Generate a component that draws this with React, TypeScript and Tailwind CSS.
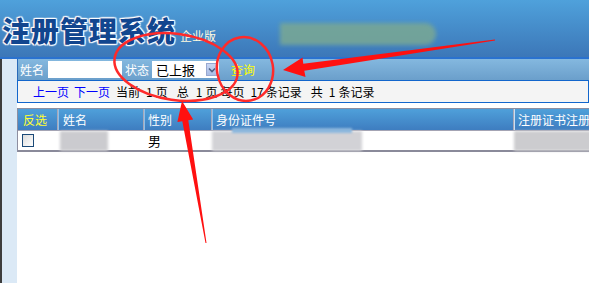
import React from 'react';

const cjk = '"Noto Sans CJK SC", "Liberation Sans", sans-serif';

export default function App() {
  const pager = [
    { t: '上一页', blue: true, ml: 0 },
    { t: '下一页', blue: true, ml: 5 },
    { t: '当前', ml: 6 },
    { t: '1', ml: 6 },
    { t: '页', ml: 3 },
    { t: '总', ml: 9 },
    { t: '1', ml: 7 },
    { t: '页', ml: 3 },
    { t: '每页', ml: 3 },
    { t: '17', ml: 6 },
    { t: '条记录', ml: 2 },
    { t: '共', ml: 9 },
    { t: '1', ml: 6 },
    { t: '条记录', ml: 3 },
  ];

  return (
    <div className="relative w-[589px] h-[283px] overflow-hidden bg-white" style={{ fontFamily: cjk }}>
      {/* 顶部标题栏 */}
      <div className="relative h-[57px] bg-gradient-to-b from-[#4fa1db] to-[#3c77b8] flex items-start pt-[13px] pl-[2px]">
        <span className="text-[28px] leading-[34px] font-black text-[#12468f] tracking-[1px] [text-shadow:0_0_2px_#fff,0_0_2px_#fff,1px_1px_1px_#fff,-1px_-1px_1px_#fff,1px_-1px_1px_#fff,-1px_1px_1px_#fff]">
          注册管理系统
        </span>
        <span className="ml-[4px] mt-[16px] text-[12px] leading-[14px] text-[#fffbe0]">企业版</span>
        {/* 打码区域 */}
        <div className="absolute left-[280px] top-[23px] w-[156px] h-[22px] rounded-r-full bg-[#7aa893] blur-[2px] opacity-85"></div>
      </div>
      <div className="h-[2px] bg-[#2a72cf]"></div>

      <div className="flex">
        {/* 左侧边栏 */}
        <div className="w-[17px] h-[224px] bg-[#dbe9f6] border-l-2 border-[#3d3d3d]"></div>

        {/* 主体 */}
        <div className="flex-1 min-w-0">
          {/* 查询栏 */}
          <div className="h-[21px] flex items-center bg-gradient-to-b from-[#84b8df] to-[#6b9fcb] border-l border-[#2a6ab8] text-[12px] text-white">
            <span className="ml-[2px]">姓名</span>
            <div className="ml-[4px] w-[74px] h-[17px] bg-white"></div>
            <span className="ml-[3px]">状态</span>
            <div className="ml-[3px] w-[67px] h-[17px] bg-white flex items-center justify-between pl-[4px] pr-[1px]">
              <span className="text-[13px] leading-[17px] text-black">已上报</span>
              <div className="w-[12px] h-[13px] bg-gradient-to-b from-[#c9d6f2] to-[#a9bde6] border border-[#98a8d0] flex items-center justify-center">
                <svg width="8" height="6" viewBox="0 0 8 6">
                  <path d="M1 1.5 L4 4.5 L7 1.5" fill="none" stroke="#4d6185" strokeWidth="1.6" />
                </svg>
              </div>
            </div>
            <span className="ml-[12px] text-[#ffff00]">查询</span>
          </div>

          {/* 分页栏 */}
          <div className="h-[23px] bg-[#f4f4f4] border border-[#1266cc] flex items-center pl-[15px] text-[12px] text-black whitespace-nowrap">
            {pager.map((p, i) => (
              <span key={i} className={p.blue ? 'text-[#0000ff]' : ''} style={{ marginLeft: p.ml }}>
                {p.t}
              </span>
            ))}
          </div>

          {/* 表格 */}
          <div className="mt-[5px] w-[620px] border-t border-l border-[#8e8ea0] text-[12px]">
            <div className="flex h-[22px] bg-gradient-to-b from-[#4fa0da] to-[#3e7dc0] text-white border-b border-[#a4a4b4]">
              <div className="w-[40px] border-r border-[#a8a8b8] flex items-center pl-[5px] text-[#ffff33]">反选</div>
              <div className="w-[86px] border-r border-[#a8a8b8] border-l border-l-[#8ec0ea] flex items-center pl-[4px]">姓名</div>
              <div className="w-[68px] border-r border-[#a8a8b8] border-l border-l-[#8ec0ea] flex items-center pl-[3px]">性别</div>
              <div className="w-[302px] border-r border-[#a8a8b8] border-l border-l-[#8ec0ea] flex items-center pl-[3px]">身份证件号</div>
              <div className="flex-1 border-l border-l-[#c8e0f6] flex items-center pl-[3px] whitespace-nowrap">注册证书注册号</div>
            </div>
            <div className="flex h-[21px] bg-white border-b-2 border-[#8a8a9a]">
              <div className="w-[40px] flex items-center pl-[4px]">
                <div className="w-[12px] h-[13px] border border-[#1c4a78] bg-gradient-to-br from-[#dcdcdc] to-white"></div>
              </div>
              <div className="w-[86px] relative">
                <div className="absolute left-[2px] top-0 w-[48px] h-[20px] bg-[#cbcbcf] blur-[1.5px]"></div>
              </div>
              <div className="w-[68px] flex items-center pl-[4px] text-[13px] text-black">男</div>
              <div className="w-[302px] relative">
                <div className="absolute left-0 top-0 w-[150px] h-[20px] bg-[#d2d2d6] blur-[1.5px]"></div>
                <div className="absolute left-[20px] top-[-3px] w-[120px] h-[5px] bg-[#8bb6dc] blur-[1px]"></div>
              </div>
              <div className="flex-1 relative">
                <div className="absolute left-0 top-0 w-[90px] h-[20px] bg-[#cccccf] blur-[1.5px]"></div>
              </div>
            </div>
          </div>
        </div>
      </div>

      {/* 红色标注 */}
      <svg className="absolute inset-0 pointer-events-none" width="589" height="283" viewBox="0 0 589 283">
        <ellipse cx="176" cy="67" rx="62" ry="33" transform="rotate(8 176 67)" fill="none" stroke="#ff2a2a" strokeWidth="2.5" />
        <ellipse cx="245" cy="69" rx="28" ry="32" transform="rotate(-10 245 69)" fill="none" stroke="#ff2a2a" strokeWidth="2.5" />
        <polygon
          points="283,70 302.5,57.5 303.3,63.7 495,39.5 495,40.5 304.3,70.7 305.5,77"
          fill="#ff1010"
        />
        <polygon
          points="182,101 193.2,119.4 188.3,120.2 206.5,243 205.5,243 182.3,121.2 177.4,122"
          fill="#ff1010"
        />
      </svg>
    </div>
  );
}
